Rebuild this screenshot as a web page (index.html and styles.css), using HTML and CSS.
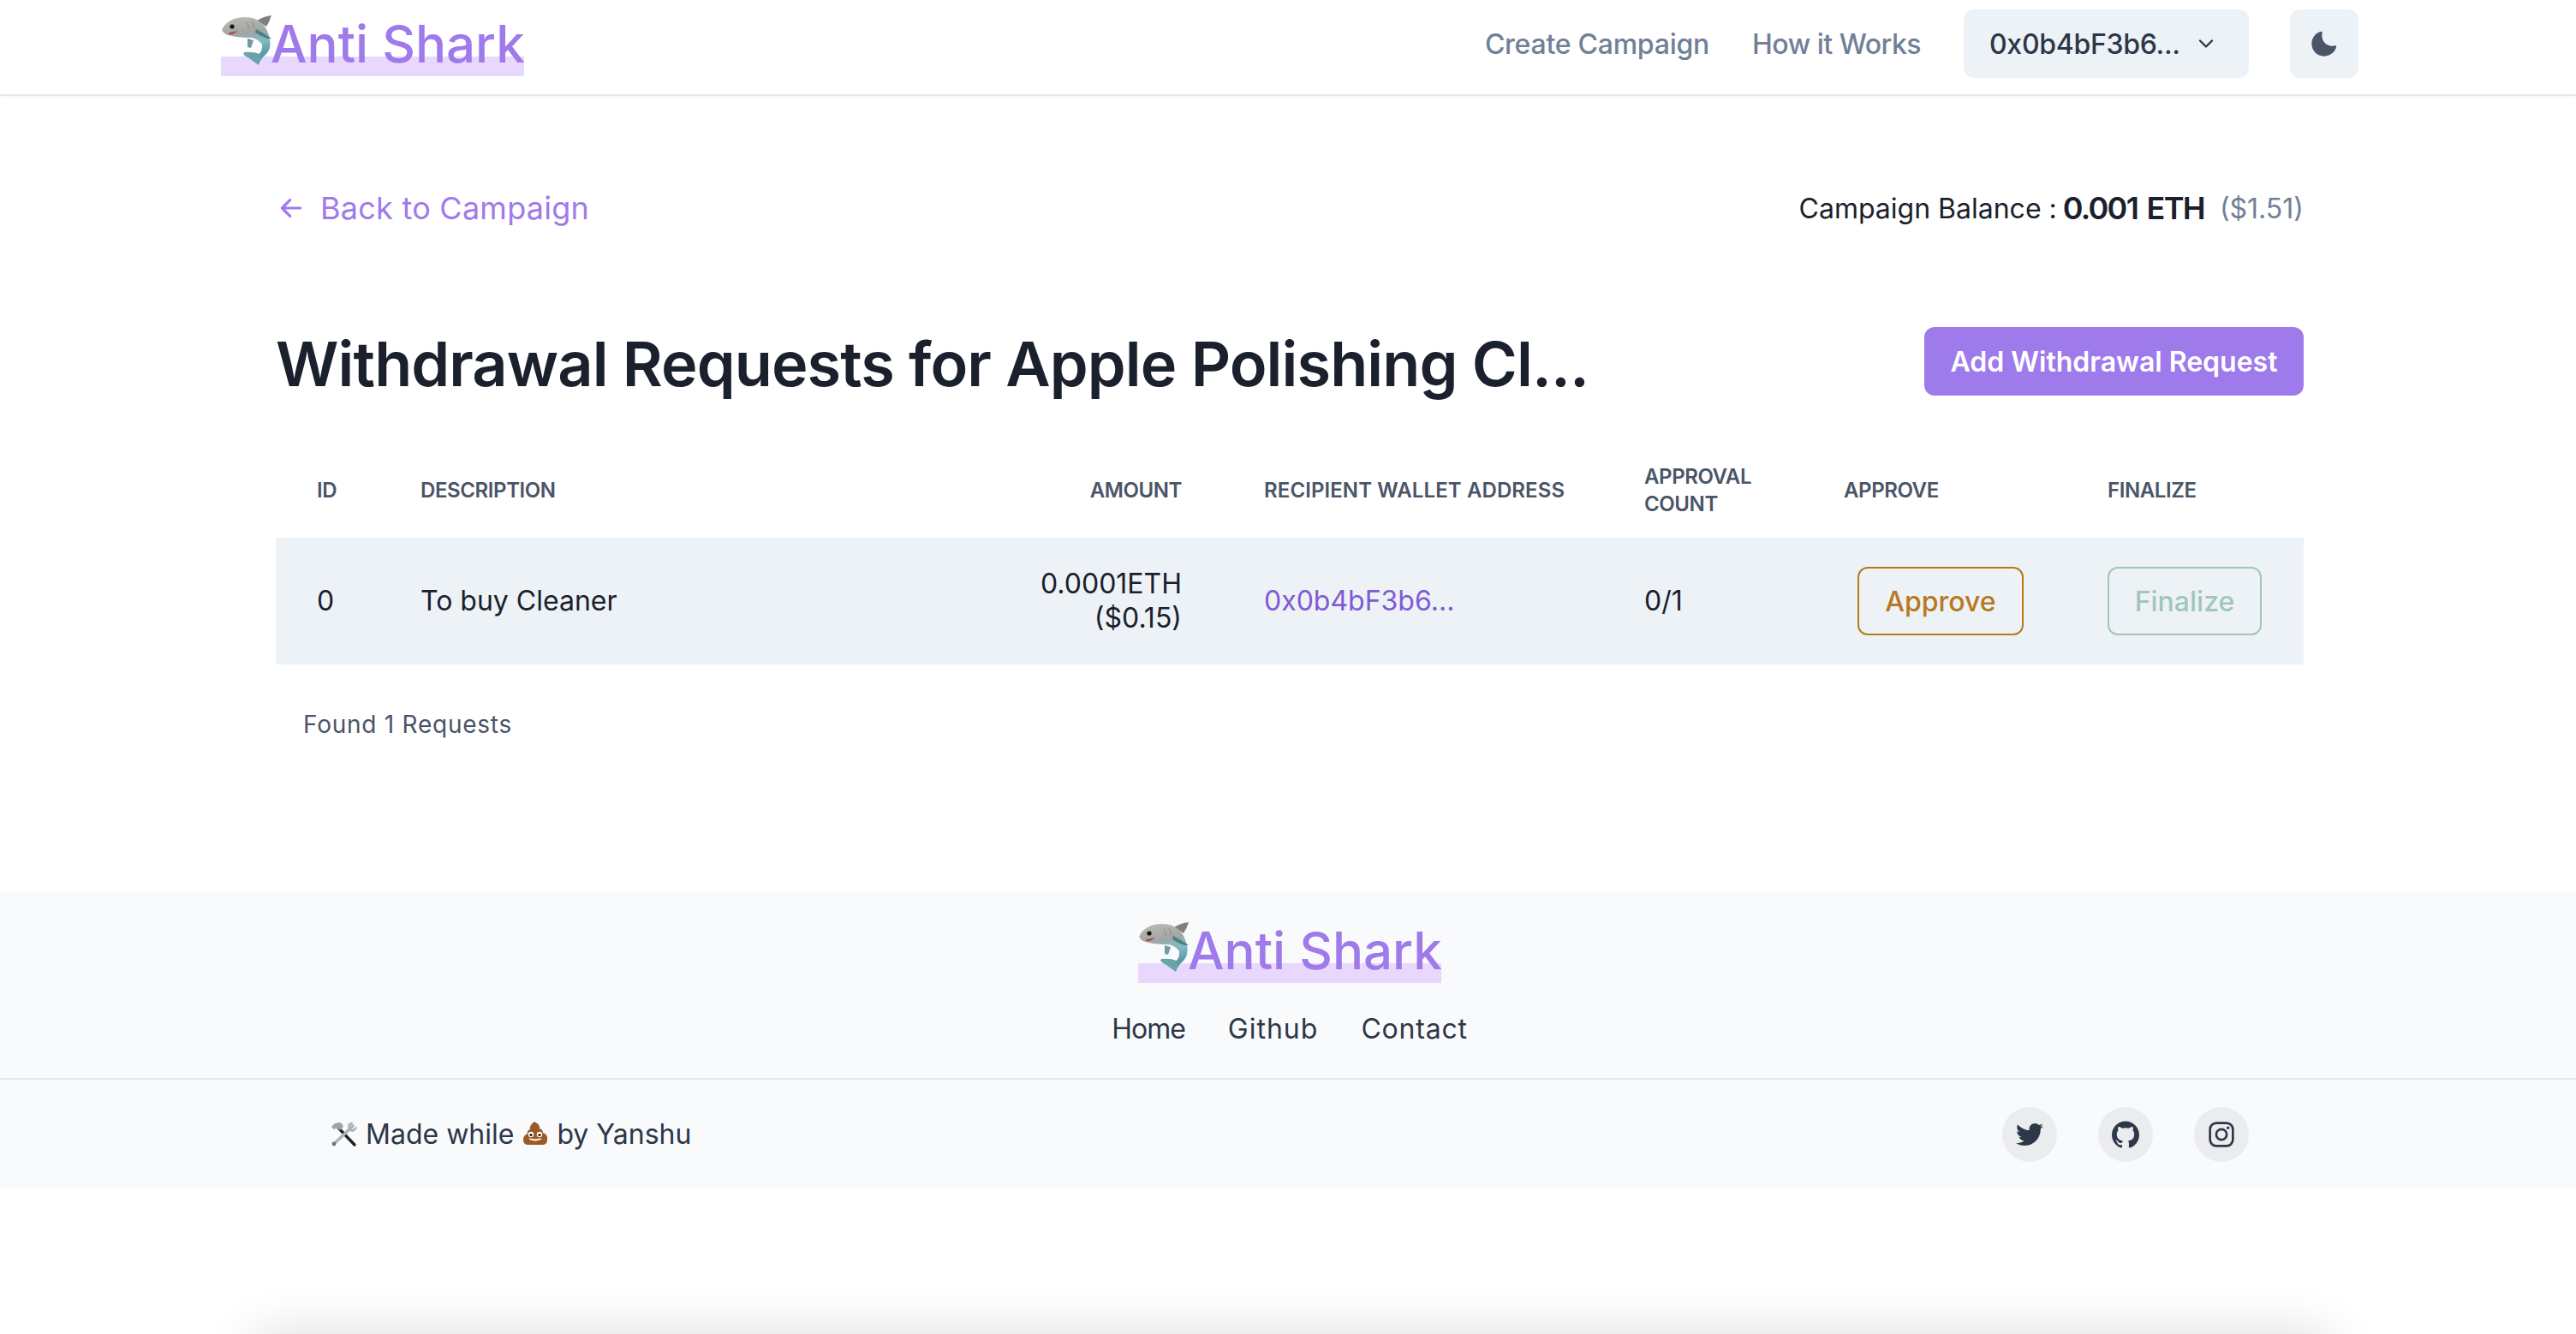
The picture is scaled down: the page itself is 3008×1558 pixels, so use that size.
FILE: index.html
```html
<!DOCTYPE html>
<html lang="en">
<head>
    <meta charset="UTF-8">
    <title>Anti Shark</title>
    <link rel="stylesheet" href="styles.css">
</head>
<body>
    <svg class="defs" width="0" height="0">
        <defs>
            <linearGradient id="shark-top" x1="0" y1="0" x2="0.2" y2="1">
                <stop offset="0" stop-color="#bdbdb9"/>
                <stop offset="0.45" stop-color="#a3a5a3"/>
                <stop offset="0.72" stop-color="#7fbcc4"/>
                <stop offset="1" stop-color="#5d9ba5"/>
            </linearGradient>
            <symbol id="shark" viewBox="0 0 60 60">
                <path d="M42 6 Q50 1 59 0 Q57 7 53 13 Z" fill="#807f7e"/>
                <path d="M31 27 L31 37 L35 38 L38 29 Z" fill="#6f9ca3"/>
                <path d="M33 50 Q24 46 27 43 Q38 42 45 45 L49 49 Q45 54 44 58 Q38 54 33 50 Z" fill="#6ba3ab"/>
                <path d="M1 17 Q4 9 15 4 Q28 0 40 4 Q50 9 54 18 Q59 29 57 38 Q54 46 47 50 L43 47 Q49 41 48 34 Q44 28 36 26 Q22 26 13 24 Q4 23 1 17 Z" fill="url(#shark-top)"/>
                <path d="M41 16 Q51 21 59 27 L54 27 Q47 25 40 20 Z" fill="#4d7f88"/>
                <circle cx="13" cy="13" r="2.6" fill="#111"/>
                <path d="M9 22 Q15 23 20 18 Q16 19 10 20 Z" fill="#b5453d"/>
                <path d="M30 8 Q33 12 32 16 M36 7 Q39 11 38 15" stroke="#8d8d88" stroke-width="1" fill="none"/>
            </symbol>
            <symbol id="tools" viewBox="0 0 32 32">
                <path d="M6 5 L28 28" stroke="#222" stroke-width="3.4" stroke-linecap="round"/>
                <path d="M11 2 Q5 2 1 7 L4 10 Q6 8 8 9 L11 11 L15 7 Q14 3 11 2 Z" fill="#9aa3ad"/>
                <path d="M26 6 L4 27" stroke="#aeb4bb" stroke-width="3.6" stroke-linecap="round"/>
                <path d="M31 6 L26 10 L22 7 L27 2 Q21 1 20 6 Q20 9 22 12 L26 13 Q31 11 31 6 Z" fill="#aeb4bb"/>
                <circle cx="4" cy="27" r="2.4" fill="#6e757d"/>
            </symbol>
            <symbol id="poop" viewBox="0 0 32 32">
                <path d="M15 1 Q22 4 21 9 Q25 10 25 14 Q31 16 30 22 Q30 28 24 28 L8 28 Q2 28 2 22 Q2 17 7 15 Q6 11 10 10 Q9 5 15 1 Z" fill="#9c5a26"/>
                <circle cx="11" cy="16" r="3.2" fill="#fff"/>
                <circle cx="21" cy="16" r="3.2" fill="#fff"/>
                <circle cx="11" cy="16.5" r="1.6" fill="#2b1608"/>
                <circle cx="21" cy="16.5" r="1.6" fill="#2b1608"/>
                <path d="M9 21 Q16 25 23 21 Q16 23 9 21 Z" fill="#fff" stroke="#fff"/>
            </symbol>
        </defs>
    </svg>

    <header class="navbar">
        <div class="navbar-inner">
            <a class="logo"><svg class="logo-shark"><use href="#shark"/></svg><span class="logo-text">Anti Shark</span></a>
            <nav class="nav-right">
                <a class="nav-link nav-create">Create Campaign</a>
                <a class="nav-link nav-how">How it Works</a>
                <button class="wallet-btn">
                    <span class="wallet-text">0x0b4bF3b6...</span>
                    <svg class="chevron" viewBox="0 0 24 24"><path d="M6 9l6 6 6-6" fill="none" stroke="#2d3748" stroke-width="2" stroke-linecap="round" stroke-linejoin="round"/></svg>
                </button>
                <button class="theme-btn">
                    <svg class="moon" viewBox="0 0 24 24"><path fill="#4a5568" d="M21.4,13.7C20.6,13.9,19.8,14,19,14c-5,0-9-4-9-9c0-0.8,0.1-1.6,0.3-2.4c0.1-0.3,0-0.7-0.3-1c-0.3-0.3-0.6-0.4-1-0.3C4.3,2.7,1,7.1,1,12c0,6.1,4.9,11,11,11c4.9,0,9.3-3.3,10.6-8.1c0.1-0.3,0-0.7-0.3-1C22.1,13.7,21.7,13.6,21.4,13.7z"/></svg>
                </button>
            </nav>
        </div>
    </header>

    <main class="content">
        <div class="top-row">
            <a class="back-link">
                <svg class="back-arrow" viewBox="0 0 24 24"><path d="M20 12H5M11 5l-7 7 7 7" fill="none" stroke="#9f7aea" stroke-width="2.4" stroke-linecap="round" stroke-linejoin="round"/></svg>
                <span class="back-text">Back to Campaign</span>
            </a>
            <p class="balance">
                <span class="balance-label">Campaign Balance :</span>
                <span class="balance-eth">0.001 ETH</span>
                <span class="balance-usd">($1.51)</span>
            </p>
        </div>

        <div class="title-row">
            <h1 class="title">Withdrawal Requests for Apple Polishing Cl...</h1>
            <button class="add-btn">Add Withdrawal Request</button>
        </div>

        <table class="requests">
            <colgroup>
                <col class="col-id"><col class="col-desc"><col class="col-amount"><col class="col-wallet"><col class="col-count"><col class="col-approve"><col class="col-finalize">
            </colgroup>
            <thead>
                <tr>
                    <th>ID</th>
                    <th>Description</th>
                    <th class="right">Amount</th>
                    <th class="th-wallet">Recipient Wallet Address</th>
                    <th>Approval Count</th>
                    <th>Approve</th>
                    <th>Finalize</th>
                </tr>
            </thead>
            <tbody>
                <tr>
                    <td>0</td>
                    <td>To buy Cleaner</td>
                    <td class="right">0.0001ETH<br>($0.15)</td>
                    <td><a class="wallet-link">0x0b4bF3b6...</a></td>
                    <td>0/1</td>
                    <td><button class="outline-btn approve-btn">Approve</button></td>
                    <td><button class="outline-btn finalize-btn" disabled>Finalize</button></td>
                </tr>
            </tbody>
        </table>
        <p class="found">Found 1 Requests</p>
    </main>

    <footer class="footer">
        <div class="footer-top">
            <a class="logo"><svg class="logo-shark"><use href="#shark"/></svg><span class="logo-text">Anti Shark</span></a>
            <div class="footer-links">
                <a class="link-home">Home</a>
                <a class="link-github">Github</a>
                <a class="link-contact">Contact</a>
            </div>
        </div>
        <div class="footer-bottom">
            <p class="made">
                <svg class="emoji"><use href="#tools"/></svg>
                <span class="made-a">Made while</span>
                <svg class="emoji"><use href="#poop"/></svg>
                <span class="made-b">by Yanshu</span>
            </p>
            <div class="socials">
                <a class="social"><svg viewBox="0 0 24 24"><path fill="#2d3748" d="M23.954 4.569c-.885.389-1.83.654-2.825.775 1.014-.611 1.794-1.574 2.163-2.723-.951.555-2.005.959-3.127 1.184-.896-.959-2.173-1.559-3.591-1.559-2.717 0-4.92 2.203-4.92 4.917 0 .39.045.765.127 1.124C7.691 8.094 4.066 6.13 1.64 3.161c-.427.722-.666 1.561-.666 2.475 0 1.71.87 3.213 2.188 4.096-.807-.026-1.566-.248-2.228-.616v.061c0 2.385 1.693 4.374 3.946 4.827-.413.111-.849.171-1.296.171-.314 0-.615-.03-.916-.086.631 1.953 2.445 3.377 4.604 3.417-1.68 1.319-3.809 2.105-6.102 2.105-.39 0-.779-.023-1.17-.067 2.189 1.394 4.768 2.209 7.557 2.209 9.054 0 13.999-7.496 13.999-13.986 0-.209 0-.42-.015-.63.961-.689 1.8-1.56 2.46-2.548l-.047-.02z"/></svg></a>
                <a class="social"><svg viewBox="0 0 24 24"><path fill="#2d3748" d="M12 .297c-6.63 0-12 5.373-12 12 0 5.303 3.438 9.8 8.205 11.385.6.113.82-.258.82-.577 0-.285-.01-1.04-.015-2.04-3.338.724-4.042-1.61-4.042-1.61C4.422 18.07 3.633 17.7 3.633 17.7c-1.087-.744.084-.729.084-.729 1.205.084 1.838 1.236 1.838 1.236 1.07 1.835 2.809 1.305 3.495.998.108-.776.417-1.305.76-1.605-2.665-.3-5.466-1.332-5.466-5.93 0-1.31.465-2.38 1.235-3.22-.135-.303-.54-1.523.105-3.176 0 0 1.005-.322 3.3 1.23.96-.267 1.98-.399 3-.405 1.02.006 2.04.138 3 .405 2.28-1.552 3.285-1.23 3.285-1.23.645 1.653.24 2.873.12 3.176.765.84 1.23 1.91 1.23 3.22 0 4.61-2.805 5.625-5.475 5.92.42.36.81 1.096.81 2.22 0 1.606-.015 2.896-.015 3.286 0 .315.21.69.825.57C20.565 22.092 24 17.592 24 12.297c0-6.627-5.373-12-12-12"/></svg></a>
                <a class="social"><svg viewBox="0 0 24 24"><rect x="2" y="2" width="20" height="20" rx="5.5" fill="none" stroke="#2d3748" stroke-width="2"/><circle cx="12" cy="12" r="4.6" fill="none" stroke="#2d3748" stroke-width="2"/><circle cx="17.8" cy="6.2" r="1.3" fill="#2d3748"/></svg></a>
            </div>
        </div>
    </footer>

    <div class="bottom-shadow"></div>
</body>
</html>
```

FILE: styles.css
```css
body {
    margin: 0;
    background-color: #fff;
    color: #1a202c;
    font-family: Inter, "Liberation Sans", sans-serif;
    font-size: 32px;
}

button {
    font-family: inherit;
    cursor: pointer;
}

.defs {
    display: block;
    height: 0;
}

/* Header */
.navbar {
    height: 110px;
    border-bottom: 2px solid #e2e8f0;
    box-shadow: 0 2px 4px rgba(0, 0, 0, 0.04);
}

.navbar-inner {
    display: flex;
    justify-content: space-between;
    align-items: flex-start;
    width: 2496px;
    margin-left: 258px;
}

.navbar-inner .logo {
    margin-top: 18px;
}

.logo {
    display: inline-flex;
    align-items: flex-start;
    height: 71px;
    width: 354px;
    background: linear-gradient(#e9d8fd, #e9d8fd) no-repeat bottom / 100% 23px;
}

.logo-shark {
    width: 60px;
    height: 60px;
    flex: none;
}

.logo-text {
    margin-top: -2px;
    margin-left: -2px;
    color: #9f7aea;
    font-size: 60px;
    font-weight: 500;
    line-height: 70px;
    white-space: nowrap;
}

.nav-right {
    display: flex;
    align-items: center;
    margin-top: 11px;
}

.nav-link {
    color: #718096;
    font-size: 32px;
    font-weight: 500;
}

.nav-create {
    letter-spacing: -0.25px;
}

.nav-how {
    margin-left: 50px;
    letter-spacing: -0.5px;
}

.wallet-btn {
    display: flex;
    align-items: center;
    width: 333px;
    height: 80px;
    margin-left: 50px;
    padding: 0 0 0 30px;
    border: none;
    border-radius: 12px;
    background-color: #edf2f7;
}

.wallet-text {
    width: 222px;
    color: #2d3748;
    font-size: 32px;
    font-weight: 500;
    letter-spacing: -0.3px;
    text-align: left;
    white-space: nowrap;
}

.chevron {
    width: 28px;
    height: 28px;
    margin-left: 17px;
}

.theme-btn {
    display: flex;
    align-items: center;
    justify-content: center;
    width: 80px;
    height: 80px;
    margin-left: 48px;
    padding: 0;
    border: none;
    border-radius: 12px;
    background-color: #edf2f7;
}

.moon {
    width: 32px;
    height: 32px;
}

/* Main */
.content {
    width: 2368px;
    margin-left: 322px;
}

.top-row {
    display: flex;
    justify-content: space-between;
    align-items: center;
    height: 46px;
    margin-top: 108px;
}

.back-link {
    display: flex;
    align-items: center;
    color: #9f7aea;
    font-size: 36px;
    letter-spacing: 0.25px;
}

.back-arrow {
    width: 32px;
    height: 32px;
    margin-left: 2px;
    margin-right: 18px;
}

.balance {
    display: flex;
    align-items: center;
    margin: 0;
}

.balance-eth {
    margin-left: 7px;
    font-size: 36px;
    font-weight: 600;
    letter-spacing: -1.7px;
    word-spacing: 3px;
}

.balance-usd {
    margin-left: 18px;
    color: #718096;
}

.title-row {
    display: flex;
    justify-content: space-between;
    align-items: center;
    height: 80px;
    margin-top: 116px;
}

.title {
    margin: 4px 0 0;
    color: #1a202c;
    font-size: 72px;
    font-weight: 600;
    letter-spacing: -0.9px;
    white-space: nowrap;
}

.add-btn {
    width: 443px;
    height: 80px;
    padding: 0;
    border: none;
    border-radius: 12px;
    background-color: #9f7aea;
    color: #fff;
    font-size: 32px;
    font-weight: 600;
    white-space: nowrap;
}

/* Table */
.requests {
    width: 2368px;
    margin-top: 68px;
    border-collapse: collapse;
    table-layout: fixed;
}

.col-id { width: 121px; }
.col-desc { width: 687px; }
.col-amount { width: 298px; }
.col-wallet { width: 444px; }
.col-count { width: 233px; }
.col-approve { width: 308px; }
.col-finalize { width: 277px; }

.requests th {
    height: 86px;
    padding: 0 48px 12px;
    color: #4a5568;
    font-size: 24px;
    font-weight: 600;
    line-height: 32px;
    letter-spacing: -0.4px;
    text-align: left;
    text-transform: uppercase;
}

.requests .th-wallet {
    letter-spacing: 0.1px;
    white-space: nowrap;
}

.requests td {
    height: 148px;
    padding: 0 48px;
    background-color: #edf2f7;
    line-height: 40px;
}

.requests .right {
    text-align: right;
}

.wallet-link {
    color: #805ad5;
}

.outline-btn {
    height: 80px;
    padding: 0;
    border-radius: 12px;
    background: transparent;
    font-size: 32px;
    font-weight: 500;
}

.approve-btn {
    width: 194px;
    margin-left: 16px;
    border: 2px solid #b7791f;
    color: #b7791f;
}

.finalize-btn {
    width: 180px;
    border: 2px solid #2f855a;
    color: #2f855a;
    opacity: 0.4;
}

.found {
    margin: 52px 0 0 32px;
    color: #4a5568;
    font-size: 28px;
    line-height: 36px;
    letter-spacing: 0.75px;
}

/* Footer */
.footer {
    margin-top: 178px;
    background-color: #f9fafc;
    color: #2d3748;
}

.footer-top {
    display: flex;
    flex-direction: column;
    align-items: center;
    height: 219px;
    padding-left: 4px;
    padding-top: 35px;
    box-sizing: border-box;
    border-bottom: 2px solid #e2e8f0;
}

.footer-links {
    display: flex;
    gap: 50px;
    margin-top: 34px;
    line-height: 40px;
}

.link-home {
    letter-spacing: -1px;
}

.link-github {
    letter-spacing: 1px;
}

.link-contact {
    letter-spacing: 0.8px;
}

.footer-bottom {
    display: flex;
    justify-content: space-between;
    align-items: center;
    width: 2240px;
    height: 127px;
    margin-left: 386px;
}

.made {
    display: flex;
    align-items: center;
    margin: 0;
}

.emoji {
    width: 32px;
    height: 32px;
}

.made-a {
    margin-left: 9px;
    margin-right: 9px;
}

.made-b {
    margin-left: 9px;
}

.socials {
    display: flex;
    gap: 48px;
}

.social {
    display: flex;
    align-items: center;
    justify-content: center;
    width: 64px;
    height: 64px;
    border-radius: 50%;
    background-color: #ebecee;
}

.social svg {
    width: 32px;
    height: 32px;
}

/* shadow of something sitting just below the fold */
.bottom-shadow {
    position: fixed;
    left: 298px;
    right: 288px;
    bottom: -60px;
    height: 60px;
    box-shadow: 0 0 60px rgba(0, 0, 0, 0.14);
}
```
